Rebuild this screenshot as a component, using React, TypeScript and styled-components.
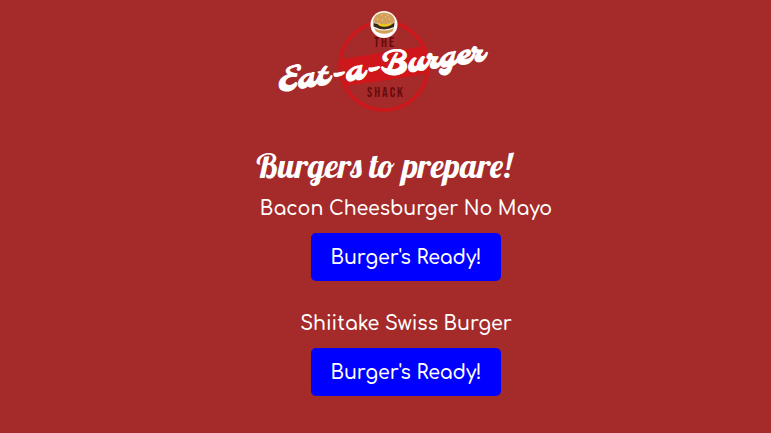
import React from "react";
import styled, { createGlobalStyle } from "styled-components";

const GlobalStyle = createGlobalStyle`
  * { box-sizing: border-box; }
  body {
    margin: 0;
    background: #a52a2a;
    color: #fff;
    font-family: Comfortaa, Lato, sans-serif;
    font-size: 19px;
    font-weight: 600;
    line-height: 24px;
  }
`;

const Page = styled.main`
  display: flex;
  flex-direction: column;
  align-items: center;
  padding: 10px 3px 36px 0;
`;

const Logo = styled.svg`
  display: block;
  width: 214px;
  height: 104px;
  overflow: visible;
`;

const ScriptText = styled.text`
  font-family: Molle, Lobster, "Liberation Serif", serif;
  font-weight: 400;
  font-size: 32px;
  fill: #fff;
  stroke: #fff;
  stroke-width: 1px;
`;

const BlockText = styled.text`
  font-family: "Bebas Neue", Oswald, Roboto, sans-serif;
  font-weight: 400;
  font-size: 14px;
  letter-spacing: 2px;
  fill: #650b0d;
`;

const Title = styled.h1`
  margin: 32px 0 0;
  font-family: Lobster, "Liberation Serif", serif;
  font-size: 34px;
  font-weight: 400;
  line-height: 40px;
  text-align: center;
`;

const OrderList = styled.ul`
  align-self: stretch;
  display: flex;
  flex-direction: column;
  gap: 31px;
  margin: 11px 0 0;
  padding: 0 0 0 44px;
  list-style: none;
`;

const Order = styled.li`
  display: flex;
  flex-direction: column;
  align-items: center;
  gap: 12px;
  text-align: center;
`;

const ReadyButton = styled.button`
  width: 190px;
  height: 48px;
  padding: 1px 0 0;
  border: 0;
  border-radius: 5px;
  background: #00f;
  color: #fff;
  font: inherit;
  white-space: nowrap;
  cursor: pointer;
`;

const orders = ["Bacon Cheesburger No Mayo", "Shiitake Swiss Burger"];

function BrandLogo() {
  return (
    <Logo viewBox="0 0 214 104" role="img" aria-label="The Eat-a-Burger Shack">
      <circle cx="107" cy="56" r="44" fill="none" stroke="#cf171b" strokeWidth="3.4" />
      <path d="M65 49 147 36Q152 49 151 64L70 76Q65 64 65 49Z" fill="#cf171b" />
      <BlockText x="97" y="37">THE</BlockText>
      <BlockText x="90" y="87">SHACK</BlockText>
      <circle cx="107" cy="14.5" r="13.5" fill="#fff" />
      <path d="M96 12.5C96 6 101 2.5 107 2.5S118 6 118 12.5Q107 16 96 12.5Z" fill="#d2a05b" />
      <path d="M96.5 13Q107 16 117.5 13L117 17Q107 22 96.5 16.5Z" fill="#39271b" />
      <path d="M100 13.5Q107 15 116 13.5L113 15.5Q107 18 102 15.5Z" fill="#f2cd16" />
      <path d="M97 18Q107 23 117 18L115.5 21.5Q107 26 99 21.5Z" fill="#d2a05b" />
      <path d="M100 9h1M104 5h1M108 7h1M112 9h1M105 10h1M110 5h1" stroke="#f2dcae" strokeWidth="1" />
      <g transform="translate(1 82) rotate(-8.5)">
        <ScriptText x="0" y="0">Eat-a-Burger</ScriptText>
      </g>
    </Logo>
  );
}

export default function App() {
  return (
    <>
      <GlobalStyle />
      <Page>
        <BrandLogo />
        <Title>Burgers to prepare!</Title>
        <OrderList>
          {orders.map((name) => (
            <Order key={name}>
              <span>{name}</span>
              <ReadyButton type="button">Burger's Ready!</ReadyButton>
            </Order>
          ))}
        </OrderList>
      </Page>
    </>
  );
}
